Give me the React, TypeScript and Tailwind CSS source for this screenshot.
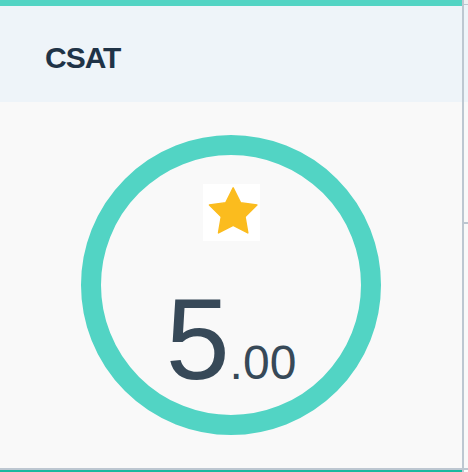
const sans = "font-['Liberation_Sans',Arial,sans-serif]";

function Star() {
  return (
    <div className="flex h-[57px] w-[57px] items-center justify-center bg-white">
      <svg viewBox="-0.7 0.4 24 24" className="h-[57px] w-[57px] blur-[0.6px]">
        <path
          d="M12 2l3.09 6.26L22 9.27l-5 4.87 1.18 6.88L12 17.77l-6.18 3.25L7 14.14 2 9.27l6.91-1.01L12 2z"
          fill="#fbbc1e"
          strokeLinejoin="round"
          stroke="#fbbc1e"
          strokeWidth="0.6"
        />
      </svg>
    </div>
  );
}

function CsatCard() {
  return (
    <div className="flex h-[468px] flex-col border-t-[6px] border-[#52d4c4] bg-[#f9f9f9]">
      <div className="h-[96px] bg-[#eef4f9] pl-[45px] pt-[37px]">
        <h2 className={`${sans} text-[30px] font-bold leading-none tracking-[-1px] text-[#1f3347]`}>
          CSAT
        </h2>
      </div>
      <div className="flex flex-1 items-center justify-center">
        <div className="flex h-[300px] w-[300px] flex-col items-center rounded-full border-[20px] border-[#52d4c4] pt-[29px]">
          <Star />
          <div className={`${sans} mt-[41px] flex items-baseline leading-none text-[#374958]`}>
            <span className="text-[115px]">5</span>
            <span className="text-[48px]">.00</span>
          </div>
        </div>
      </div>
    </div>
  );
}

function SideCard() {
  return (
    <div className="flex h-[468px] flex-col bg-[#f9f9f9]">
      <div className="h-[4px] bg-[#eef0f2]" />
      <div className="h-[1px] bg-[#bcc6d0]" />
      <div className="h-[97px] bg-[#eef4f9]" />
      <div className="h-[120px]" />
      <div className="h-[2px] bg-[#bcc6d0]" />
    </div>
  );
}

export default function App() {
  return (
    <div className="h-[472px] w-[468px] overflow-hidden bg-[#bdc7d1]">
      <div className="grid grid-cols-[462px_1fr] gap-[2px]">
        <CsatCard />
        <SideCard />
        <div className="h-[20px] border-t-[2px] border-[#1ab89f] bg-[#f9f9f9]" />
        <div className="h-[20px] bg-[#f9f9f9]" />
      </div>
    </div>
  );
}
